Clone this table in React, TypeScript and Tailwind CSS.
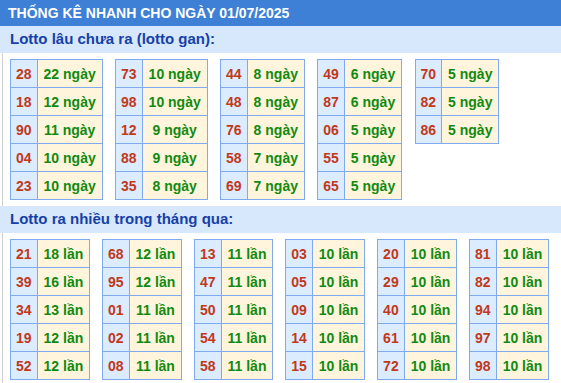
import React from "react";

const gan: [string, string][][] = [
  [["28", "22 ngày"], ["18", "12 ngày"], ["90", "11 ngày"], ["04", "10 ngày"], ["23", "10 ngày"]],
  [["73", "10 ngày"], ["98", "10 ngày"], ["12", "9 ngày"], ["88", "9 ngày"], ["35", "8 ngày"]],
  [["44", "8 ngày"], ["48", "8 ngày"], ["76", "8 ngày"], ["58", "7 ngày"], ["69", "7 ngày"]],
  [["49", "6 ngày"], ["87", "6 ngày"], ["06", "5 ngày"], ["55", "5 ngày"], ["65", "5 ngày"]],
  [["70", "5 ngày"], ["82", "5 ngày"], ["86", "5 ngày"]],
];

const nhieu: [string, string][][] = [
  [["21", "18 lần"], ["39", "16 lần"], ["34", "13 lần"], ["19", "12 lần"], ["52", "12 lần"]],
  [["68", "12 lần"], ["95", "12 lần"], ["01", "11 lần"], ["02", "11 lần"], ["08", "11 lần"]],
  [["13", "11 lần"], ["47", "11 lần"], ["50", "11 lần"], ["54", "11 lần"], ["58", "11 lần"]],
  [["03", "10 lần"], ["05", "10 lần"], ["09", "10 lần"], ["14", "10 lần"], ["15", "10 lần"]],
  [["20", "10 lần"], ["29", "10 lần"], ["40", "10 lần"], ["61", "10 lần"], ["72", "10 lần"]],
  [["81", "10 lần"], ["82", "10 lần"], ["94", "10 lần"], ["97", "10 lần"], ["98", "10 lần"]],
];

function Tbl({ rows }: { rows: [string, string][] }) {
  return (
    <div className="grid grid-cols-[auto_auto] self-start border-t border-l border-[#80aaf0]">
      {rows.map(([a, b], i) => (
        <React.Fragment key={i}>
          <div className="h-[28px] px-[5px] flex items-center justify-center border-r border-b border-[#80aaf0] bg-[#dcecff] text-[#c0391b]">
            {a}
          </div>
          <div className="h-[28px] px-[6px] flex items-center justify-center border-r border-b border-[#80aaf0] bg-[#fff5dc] text-[#118a11]">
            {b}
          </div>
        </React.Fragment>
      ))}
    </div>
  );
}

function Section({
  title,
  tables,
  wide,
}: {
  title: string;
  tables: [string, string][][];
  wide?: boolean;
}) {
  return (
    <div>
      <div className="h-[27px] flex items-center pl-[10px] bg-[#d7e8fc] text-[#1640a8] text-[15px] font-bold">
        {title}
      </div>
      <div
        className={
          "ml-[2px] border-l border-[#cfcfcf] pl-[7px] pt-[6px] pb-[6px] flex text-[14px] font-bold leading-[16px] " +
          (wide ? "gap-[12.3px]" : "gap-[11.7px]")
        }
      >
        {tables.map((t, i) => (
          <Tbl key={i} rows={t} />
        ))}
      </div>
    </div>
  );
}

export default function App() {
  return (
    <div
      className="w-[561px] h-[383px] bg-white overflow-hidden"
      style={{ fontFamily: '"Liberation Sans", Arial, sans-serif' }}
    >
      <div className="h-[26px] flex items-center pl-[8px] bg-[#3d80d6] text-white text-[14px] font-bold">
        THỐNG KÊ NHANH CHO NGÀY 01/07/2025
      </div>
      <Section title="Lotto lâu chưa ra (lotto gan):" tables={gan} wide />
      <Section title="Lotto ra nhiều trong tháng qua:" tables={nhieu} />
    </div>
  );
}
